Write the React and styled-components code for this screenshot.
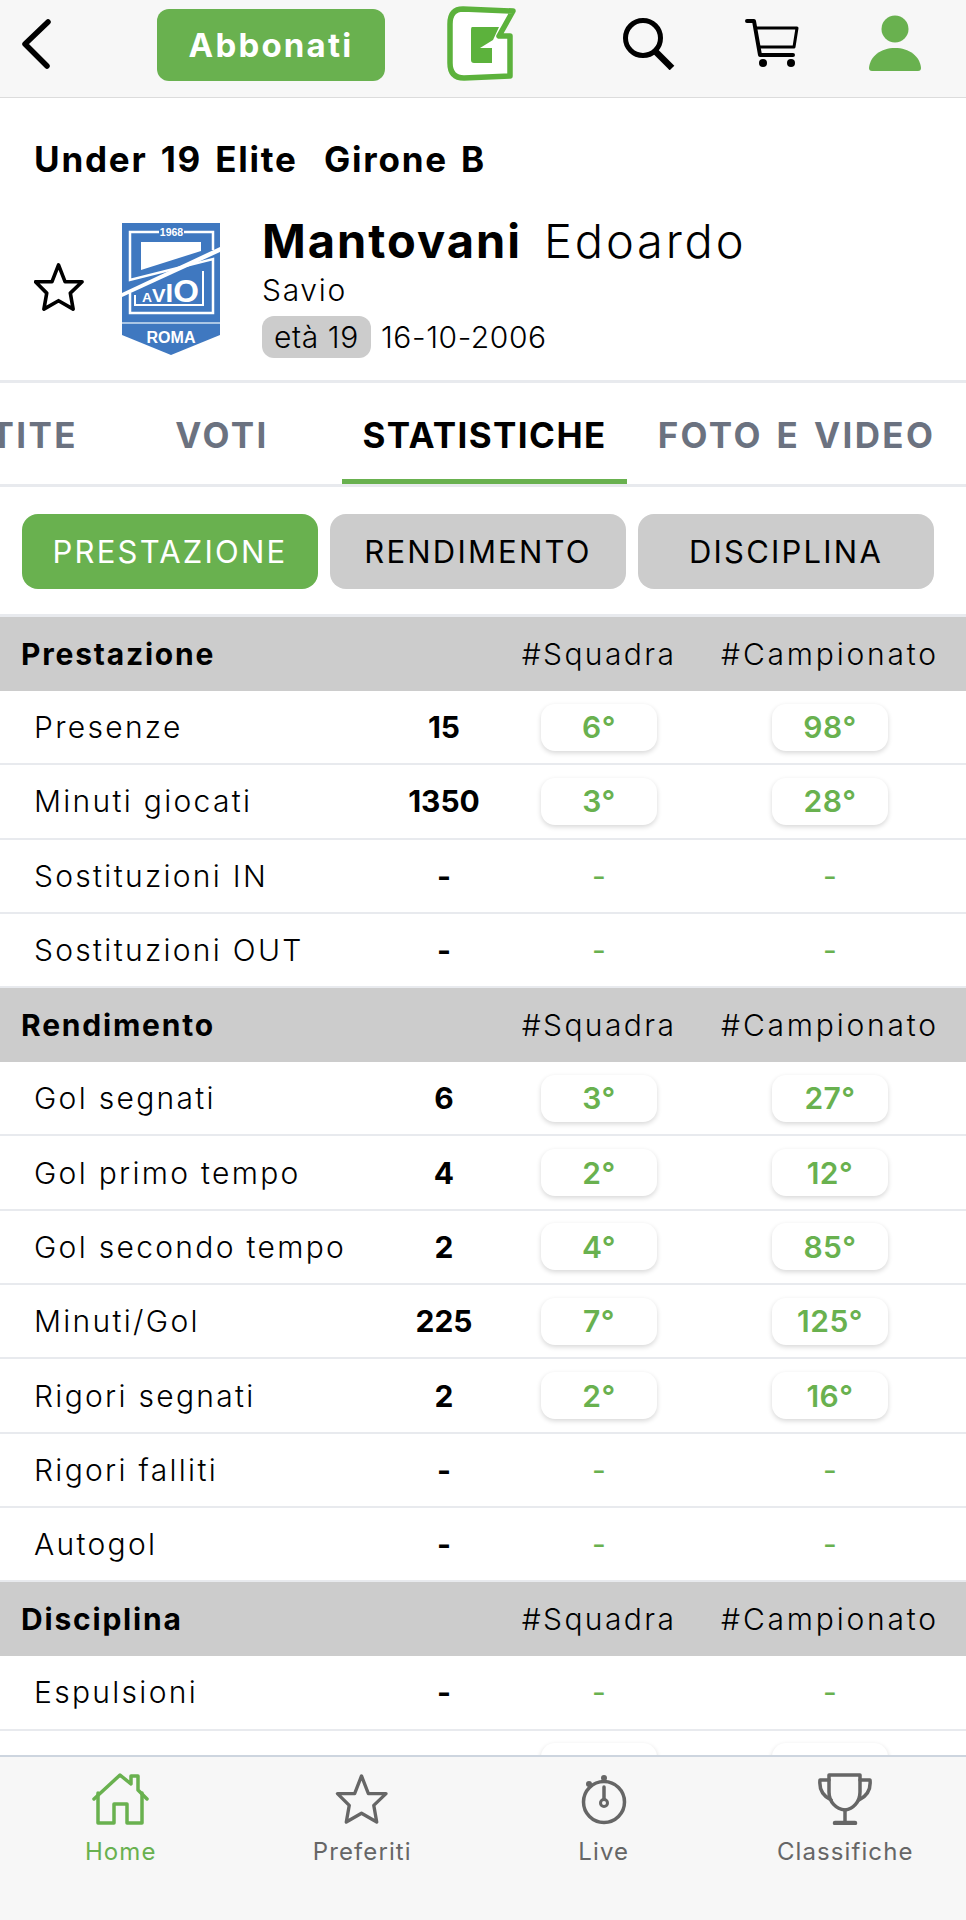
import React from 'react';
import styled, { createGlobalStyle } from 'styled-components';

const GREEN = '#69b14f';
const FONT = '"Inter", "Liberation Sans", sans-serif';

const Global = createGlobalStyle`
  html, body { margin: 0; padding: 0; background: #fff; }
  body { font-family: ${FONT}; color: #000; }
  * { box-sizing: border-box; }
`;

const Page = styled.div`
  width: 966px; height: 1920px; overflow: hidden; position: relative; background: #fff;
`;
const Header = styled.header`
  height: 98px; background: #f7f7f7; border-bottom: 1px solid #dcdcdc; display: flex; align-items: center;
`;
const Back = styled.div`width: 157px; display: flex; padding-left: 20px; margin-top: -9px;`;
const Subscribe = styled.div`
  width: 228px; height: 72px; border-radius: 12px; background: ${GREEN}; color: #fff;
  font-size: 33px; font-weight: 700; display: flex; align-items: center; justify-content: center; margin-top: -8px;
  letter-spacing: 2.2px;
`;
const Logo = styled.div`margin-left: 62px; margin-top: -10px; display: flex; flex: none;`;
const Tools = styled.div`
  display: flex; align-items: center; margin-left: 105px; gap: 70px; margin-top: -11px;
`;
const Intro = styled.section`
  height: 285px; padding: 39px 34px 0; border-bottom: 3px solid #e8eaee;
`;
const League = styled.h1`
  margin: 0; font-size: 35px; line-height: 44px; font-weight: 700; word-spacing: 3px; letter-spacing: 1.8px;
`;
const Player = styled.div`
  display: grid; grid-template-columns: 88px 141px 1fr; margin-top: 34px; align-items: center;
`;
const Star = styled.div`display: flex;`;
const Crest = styled.div`display: flex; margin-top: 5px;`;
const Info = styled.div`display: flex; flex-direction: column; margin-left: -1px;`;
const NameLine = styled.div`display: flex; align-items: baseline; gap: 22px; line-height: 56px; margin-top: -2px;`;
const Surname = styled.span`font-size: 47px; font-weight: 700; letter-spacing: 2px;`;
const Given = styled.span`font-size: 47px; font-weight: 300; letter-spacing: 2.8px;`;
const Club = styled.div`font-size: 30px; font-weight: 300; line-height: 44px; letter-spacing: 1.7px; margin-top: -1px;`;
const BirthLine = styled.div`display: flex; align-items: center; gap: 10px; font-size: 30px; font-weight: 300; margin-top: 4px; letter-spacing: 0.6px;`;
const Age = styled.span`
  background: #ccc; border-radius: 12px; height: 42px; padding: 0 12px; display: flex; align-items: center;
`;
const Tabs = styled.nav`
  height: 104px; border-bottom: 3px solid #e8eaee; display: flex; align-items: stretch; overflow: hidden;
`;
const Tab = styled.div`
  flex: 0 0 ${p => p.$w}px; min-width: 0; display: flex; align-items: center; justify-content: ${p => p.$end ? 'flex-end' : 'center'};
  padding: 7px ${p => p.$end ? 24 : 0}px 0 0;
  font-size: 35px; font-weight: 700; white-space: nowrap; color: ${p => p.$active ? '#000' : '#6b7280'};
  border-bottom: 5px solid ${p => p.$active ? GREEN : 'transparent'};
  letter-spacing: ${p => p.$active ? 1.4 : 2.4}px; word-spacing: 3px;
`;
const Filters = styled.div`
  display: grid; grid-template-columns: repeat(3, 296px); gap: 12px; padding: 27px 0 0 22px; height: 127px;
`;
const Filter = styled.div`
  height: 75px; border-radius: 16px; display: flex; align-items: center; justify-content: center;
  font-size: 31px; letter-spacing: 2.2px; font-weight: 400;
  background: ${p => p.$active ? GREEN : '#ccc'}; color: ${p => p.$active ? '#fff' : '#000'};
`;
const Table = styled.div`border-top: 3px solid #e8eaee;`;
const columns = 'grid-template-columns: 400px 88px 222px 240px;';
const SectionRow = styled.div`
  ${columns} display: grid; align-items: center; height: 74px; background: #ccc; font-size: 30px;
`;
const SectionName = styled.div`font-weight: 700; padding-left: 21px; letter-spacing: 1.8px;`;
const SectionCol = styled.div`
  font-weight: 300; text-align: center; white-space: nowrap; letter-spacing: ${p => p.$wide ? 2.8 : 2.4}px;
`;
const Row = styled.div`
  ${columns} display: grid; align-items: center; height: 74.3px; border-bottom: 2.5px solid #e8eaee; font-size: 30px;
`;
const Label = styled.div`font-weight: 300; padding-left: 34px; letter-spacing: 2.3px; white-space: nowrap;`;
const Value = styled.div`font-weight: 700; text-align: center;`;
const RankCell = styled.div`display: flex; justify-content: center;`;
const Pill = styled.div`
  width: 116px; height: 47px; border-radius: 14px; background: #fff; color: ${GREEN}; font-size: 30px; font-weight: 600;
  display: flex; align-items: center; justify-content: center; box-shadow: 0 2px 5px rgba(0,0,0,.16); letter-spacing: 0.5px;
`;
const Dash = styled.div`color: ${GREEN}; font-size: 30px; font-weight: 400;`;
const Dock = styled.footer`
  position: absolute; left: 0; right: 0; bottom: 0; height: 165px; background: #f7f7f7; border-top: 2px solid #cdd5df;
  display: grid; grid-template-columns: repeat(4, 1fr);
`;
const DockItem = styled.div`
  display: flex; flex-direction: column; align-items: center; padding-top: 16px; font-size: 24px; font-weight: 400;
  line-height: 30px; letter-spacing: 1.1px; color: ${p => p.$active ? GREEN : '#666'};
`;
const DockIcon = styled.div`height: 52px; display: flex; align-items: center; margin-bottom: 12px;`;

const sections = [
  { name: 'Prestazione', rows: [['Presenze', '15', '6°', '98°'], ['Minuti giocati', '1350', '3°', '28°'], ['Sostituzioni IN', '-'], ['Sostituzioni OUT', '-']] },
  { name: 'Rendimento', rows: [['Gol segnati', '6', '3°', '27°'], ['Gol primo tempo', '4', '2°', '12°'], ['Gol secondo tempo', '2', '4°', '85°'], ['Minuti/Gol', '225', '7°', '125°'], ['Rigori segnati', '2', '2°', '16°'], ['Rigori falliti', '-'], ['Autogol', '-']] },
  { name: 'Disciplina', rows: [['Espulsioni', '-'], ['Ammonizioni', '7', '7°', '57°']] },
];

const Chevron = () => <svg width="34" height="50" viewBox="0 0 34 50"><path d="M28 3 L5 25 L27 47" fill="none" stroke="#000" strokeWidth="5.5" strokeLinecap="round" strokeLinejoin="round"/></svg>;
const GLogo = () => (
  <svg width="71" height="75" viewBox="0 0 71 75">
    <path d="M16 3 L66 5 L52 30 H63 V70 L17 72 Q3 72 3 57 V18 Q3 3 16 3Z" fill="#fff" stroke="#5cb23c" strokeWidth="5.5" strokeLinejoin="round"/>
    <path d="M25 21 H52 L46 34 L33 42 H45 V57 H27 Q24 57 24 54 V24 Q24 21 25 21Z" fill="#5cb23c"/>
  </svg>
);
const Search = () => <svg width="52" height="54" viewBox="0 0 52 54"><circle cx="20" cy="22" r="17.5" fill="none" stroke="#000" strokeWidth="5"/><path d="M32 35 L49 52" stroke="#000" strokeWidth="6.5"/></svg>;
const Cart = () => (
  <svg width="54" height="49" viewBox="0 0 54 49" fill="none" stroke="#000">
    <path d="M2 2 H9 L15 36 H48" strokeWidth="4" strokeLinecap="round" strokeLinejoin="round"/>
    <path d="M11 9 H52 L49 28 H14" strokeWidth="3" strokeLinejoin="round"/>
    <circle cx="18" cy="44" r="4" fill="#000" stroke="none"/><circle cx="46" cy="44" r="4" fill="#000" stroke="none"/>
  </svg>
);
const User = () => <svg width="52" height="56" viewBox="0 0 52 56"><circle cx="26" cy="14" r="13.5" fill={GREEN}/><path d="M0 53 C1 41 12 33 26 33 C40 33 51 41 52 53 Q52 56 49 56 H3 Q0 56 0 53Z" fill={GREEN}/></svg>;
const StarIcon = ({ w = 50, h = 50, color = '#000', stroke = 3.8 }) => (
  <svg width={w} height={h} viewBox="0 0 52 53">
    <path d="M25.5 3 L32.5 21 L50.5 21 L38 33 L41 50 L25.5 41 L10 50 L13 33 L1 21 L18.5 21 Z" fill="none" stroke={color} strokeWidth={stroke} strokeLinejoin="round"/>
  </svg>
);
const CrestIcon = () => (
  <svg width="98" height="132" viewBox="0 0 98 132">
    <path d="M0 0H98V112L49 132L0 112Z" fill="#3f78c0"/>
    <path d="M0 100 H98" stroke="#cfe0f2" strokeWidth="1.5"/>
    <path d="M37 9 H8 V57 L91 36 V90 H8 V70" fill="none" stroke="#fff" strokeWidth="2.5"/>
    <path d="M62 9 H91 V27" fill="none" stroke="#fff" strokeWidth="2.5"/>
    <path d="M19 19 H79 V28 L19 47Z" fill="#fff"/>
    <path d="M0 70 L98 24 V29 L0 74Z" fill="#fff"/>
    <path d="M81 48 V82 H13 V72" fill="none" stroke="#fff" strokeWidth="2"/>
    <text x="49.5" y="13" textAnchor="middle" fontSize="10.5" fontWeight="700" fill="#fff" fontFamily="Liberation Sans, sans-serif">1968</text>
    <text x="20" y="79" fontWeight="700" fill="#fff" fontFamily="Liberation Sans, sans-serif" textLength="57" lengthAdjust="spacingAndGlyphs">
      <tspan fontSize="13">A</tspan><tspan fontSize="19">V</tspan><tspan fontSize="26">I</tspan><tspan fontSize="31">O</tspan>
    </text>
    <text x="49" y="120" textAnchor="middle" fontSize="16" fontWeight="700" fill="#fff" fontFamily="Liberation Sans, sans-serif">ROMA</text>
  </svg>
);
const HomeIcon = () => (
  <svg width="57" height="52" viewBox="0 0 57 52" fill="none" stroke={GREEN} strokeWidth="3.5" strokeLinejoin="round" strokeLinecap="round">
    <path d="M2 26 L28 2 L39 11 V3 H46 V17 L55 26"/>
    <path d="M6 20 V50 H22 V31 H35 V50 H50 V20"/>
  </svg>
);
const StopwatchIcon = () => (
  <svg width="48" height="52" viewBox="0 0 48 52" fill="none" stroke="#666" strokeWidth="3.5">
    <circle cx="24" cy="29" r="20.5"/>
    <circle cx="24" cy="5" r="3" fill="#666" stroke="none"/>
    <circle cx="9" cy="11" r="3" fill="#666" stroke="none"/>
    <path d="M24 14 V26" strokeLinecap="round"/>
    <circle cx="24" cy="30" r="3.5" strokeWidth="3"/>
  </svg>
);
const TrophyIcon = () => (
  <svg width="54" height="52" viewBox="0 0 54 52" fill="none" stroke="#666" strokeWidth="3.5" strokeLinecap="round" strokeLinejoin="round">
    <path d="M11 2 H42 V19 C42 29 35 36 27 37 C18 36 11 29 11 19Z"/>
    <path d="M11 7 H2 C1 16 5 23 13 27 M42 7 H52 C53 16 49 23 41 27"/>
    <path d="M27 37 V49"/>
    <path d="M17 50 H37" strokeWidth="4.5"/>
  </svg>
);

const Rank = ({ v }) => <RankCell>{v ? <Pill>{v}</Pill> : <Dash>-</Dash>}</RankCell>;

export default function App() {
  return (
    <Page>
      <Global />
      <Header>
        <Back><Chevron /></Back>
        <Subscribe>Abbonati</Subscribe>
        <Logo><GLogo /></Logo>
        <Tools><Search /><Cart /><User /></Tools>
      </Header>
      <Intro>
        <League>Under 19 Elite&nbsp; Girone B</League>
        <Player>
          <Star><StarIcon /></Star>
          <Crest><CrestIcon /></Crest>
          <Info>
            <NameLine><Surname>Mantovani</Surname><Given>Edoardo</Given></NameLine>
            <Club>Savio</Club>
            <BirthLine><Age>età 19</Age><span>16-10-2006</span></BirthLine>
          </Info>
        </Player>
      </Intro>
      <Tabs>
        <Tab $w={102} $end>TITE</Tab>
        <Tab $w={240}>VOTI</Tab>
        <Tab $w={285} $active>STATISTICHE</Tab>
        <Tab $w={339}>FOTO E VIDEO</Tab>
      </Tabs>
      <Filters>
        <Filter $active>PRESTAZIONE</Filter>
        <Filter>RENDIMENTO</Filter>
        <Filter>DISCIPLINA</Filter>
      </Filters>
      <Table>
        {sections.map(s => (
          <React.Fragment key={s.name}>
            <SectionRow>
              <SectionName>{s.name}</SectionName>
              <span />
              <SectionCol>#Squadra</SectionCol>
              <SectionCol $wide>#Campionato</SectionCol>
            </SectionRow>
            {s.rows.map(r => (
              <Row key={r[0]}>
                <Label>{r[0]}</Label>
                <Value>{r[1]}</Value>
                <Rank v={r[2]} />
                <Rank v={r[3]} />
              </Row>
            ))}
          </React.Fragment>
        ))}
      </Table>
      <Dock>
        <DockItem $active><DockIcon><HomeIcon /></DockIcon>Home</DockItem>
        <DockItem><DockIcon><StarIcon w={56} h={52} color="#666" stroke={3.4} /></DockIcon>Preferiti</DockItem>
        <DockItem><DockIcon><StopwatchIcon /></DockIcon>Live</DockItem>
        <DockItem><DockIcon><TrophyIcon /></DockIcon>Classifiche</DockItem>
      </Dock>
    </Page>
  );
}
